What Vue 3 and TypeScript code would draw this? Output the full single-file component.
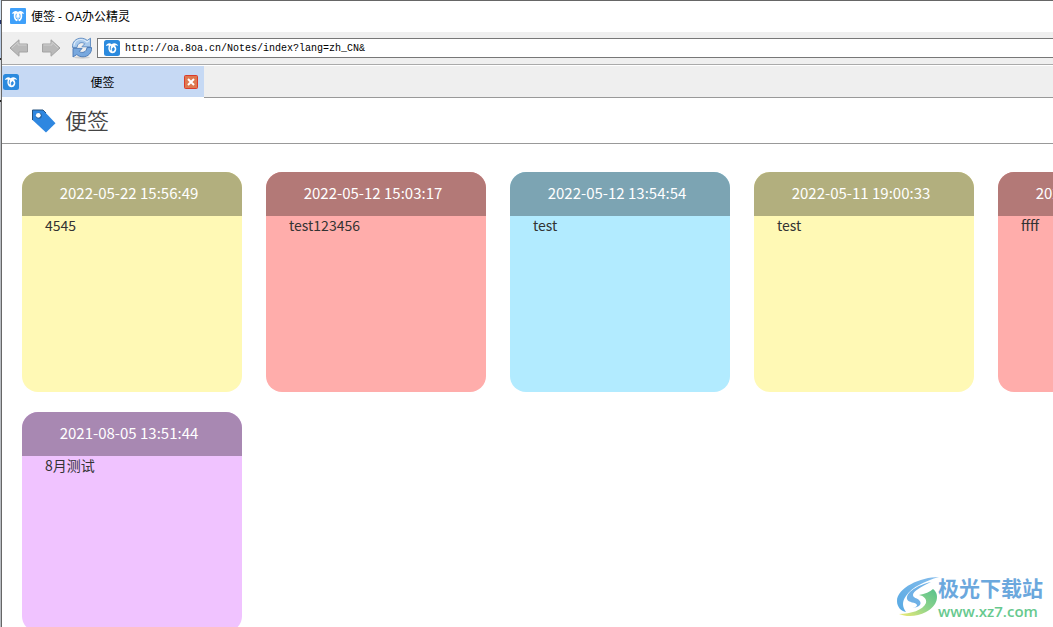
<script setup lang="ts">
interface Note {
  time: string
  text: string
  tone: 'yellow' | 'red' | 'blue' | 'purple'
}

const title = '便签'
const address = 'http://oa.8oa.cn/Notes/index?lang=zh_CN&'

const notes: Note[] = [
  { time: '2022-05-22 15:56:49', text: '4545', tone: 'yellow' },
  { time: '2022-05-12 15:03:17', text: 'test123456', tone: 'red' },
  { time: '2022-05-12 13:54:54', text: 'test', tone: 'blue' },
  { time: '2022-05-11 19:00:33', text: 'test', tone: 'yellow' },
  { time: '2021-12-20 10:21:36', text: 'ffff', tone: 'red' },
  { time: '2021-08-05 13:51:44', text: '8月测试', tone: 'purple' },
]
</script>

<template>
  <div class="desktop">
    <div class="window">
      <header class="titlebar">
        <svg class="logo" viewBox="0 0 16 16" aria-hidden="true">
          <rect width="16" height="16" rx="1" fill="#3fa0fa" />
          <path d="M8 4C6.500 2.300 3.500 2.300 1.800 5.800L4 5.600C3.200 9 4.200 12 6.500 13.200L8 12.500 9.500 13.200C11.800 12 12.800 9 12 5.600L14.200 5.800C12.500 2.300 9.500 2.300 8 4z" fill="#fff" />
          <path d="M6.500 5.800C5.600 7.500 5.700 9.500 6.700 11M9.500 5.800C10.400 7.500 10.300 9.500 9.300 11M8 9.500V13" fill="none" stroke="#3fa0fa" stroke-width=".9" />
        </svg>
        <span>{{ title }} - OA办公精灵</span>
      </header>

      <div class="toolbar">
        <button class="tool" type="button" aria-label="后退">
          <svg viewBox="0 0 20 18"><path d="M1 9 10 .8V5h8.500v8H10v4.200z" fill="#b9b9b9" stroke="#a3a3a3" /><path d="M3 8.800 9 3.300V6h8.500" fill="none" stroke="#cfcfcf" /></svg>
        </button>
        <button class="tool" type="button" aria-label="前进">
          <svg viewBox="0 0 20 18"><path d="M19 9 10 .8V5H1.500v8H10v4.200z" fill="#b9b9b9" stroke="#a3a3a3" /><path d="M2.500 6H11V3.300L17 8.800" fill="none" stroke="#cfcfcf" /></svg>
        </button>
        <button class="tool refresh" type="button" aria-label="刷新">
          <svg viewBox="0 0 22 22">
            <ellipse cx="11" cy="20.500" rx="8" ry="1.200" fill="#cfcfcf" />
            <path d="M1.500 10.500C1 5 5 1.200 10 1.200c2.500 0 4.600.8 6.200 2.300L19.500 1.200v8.600h-8.600l2.800-3C10.800 4.300 6.300 6 6 10.500z" fill="#a9caec" stroke="#5c89c0" stroke-width=".9" />
            <path d="M20.500 10.500C21 16 17 19.800 12 19.800c-2.500 0-4.600-.8-6.200-2.300L2 20v-8.600h9.100l-2.800 3C11.200 16.700 15.700 15 16 10.500z" fill="#78a8de" stroke="#4777b4" stroke-width=".9" />
            <path d="M3 8.500C3.500 4.500 6.500 2.500 10 2.500c2.500 0 4.500 1 6 2.500l2.300-1.500" fill="none" stroke="#deecfa" stroke-width="1.200" />
          </svg>
        </button>
        <label class="address">
          <svg class="logo" viewBox="0 0 16 16" aria-hidden="true">
            <rect width="16" height="16" rx="2.500" fill="#2b8ade" />
            <path d="M1.800 6C3 3 5.800 2.600 7.600 4.200 9.800 2.600 13 3 14.200 6 12.800 5 11.400 5 10.600 5.800 12.800 7 13 11 10.500 12.700 8 14 5 12.600 4.500 9.500 4.200 8 4.400 6.800 5 5.800 4 5.200 2.800 5.300 1.800 6z" fill="#fff" />
            <path d="M6.800 5.800C6 7.500 6 9 6.600 10.200M8.700 11.200C7.800 9.800 8.200 7.800 9.600 7.400 11 8.500 10.500 10.700 8.700 11.200z" fill="#2b8ade" stroke="#2b8ade" stroke-width=".7" />
          </svg>
          <input type="text" aria-label="地址" :value="address" />
        </label>
      </div>

      <nav class="tabs">
        <div class="tab">
          <svg class="logo" viewBox="0 0 16 16" aria-hidden="true">
            <rect width="16" height="16" rx="2.500" fill="#2b8ade" />
            <path d="M1.800 6C3 3 5.800 2.600 7.600 4.200 9.800 2.600 13 3 14.200 6 12.800 5 11.400 5 10.600 5.800 12.800 7 13 11 10.500 12.700 8 14 5 12.600 4.500 9.500 4.200 8 4.400 6.800 5 5.800 4 5.200 2.800 5.300 1.800 6z" fill="#fff" />
            <path d="M6.800 5.800C6 7.500 6 9 6.600 10.200M8.700 11.200C7.800 9.800 8.200 7.800 9.600 7.400 11 8.500 10.500 10.700 8.700 11.200z" fill="#2b8ade" stroke="#2b8ade" stroke-width=".7" />
          </svg>
          <span class="tab-name">{{ title }}</span>
          <button class="close" type="button" aria-label="关闭">
            <svg viewBox="0 0 14 14">
              <rect x=".5" y=".5" width="13" height="13" rx="1" fill="#de7850" stroke="#dc3a2a" />
              <path d="M4 4l6 6M10 4l-6 6" stroke="#fff" stroke-width="2" />
            </svg>
          </button>
        </div>
        <div class="tab-rest"></div>
      </nav>

      <div class="heading">
        <svg class="tag" viewBox="0 0 24 24" aria-hidden="true">
          <path d="M.5 1H11L23.500 14.200 14 23.500 .5 11z" fill="#2f87e0" />
          <path d="M.5 11V1H11l3 3" fill="none" stroke="#27527f" />
          <circle cx="6.800" cy="6.800" r="3" fill="#27629f" />
          <circle cx="6.300" cy="6.300" r="2.400" fill="#fff" />
        </svg>
        <h1>{{ title }}</h1>
      </div>

      <main class="notes">
        <article v-for="note in notes" :key="note.time" class="note" :class="note.tone">
          <h2>{{ note.time }}</h2>
          <p>{{ note.text }}</p>
        </article>
      </main>
    </div>

    <div class="watermark">
      <svg viewBox="0 0 44 42" aria-hidden="true">
        <defs>
          <linearGradient id="swirl-blue" x1="0" y1="1" x2="1" y2="0">
            <stop offset="0" stop-color="#57a9e3" />
            <stop offset="1" stop-color="#86bdec" />
          </linearGradient>
          <linearGradient id="swirl-green" x1="0" y1="1" x2="1" y2="0">
            <stop offset="0" stop-color="#f0ea72" />
            <stop offset=".5" stop-color="#8fd48b" />
            <stop offset="1" stop-color="#55c08c" />
          </linearGradient>
        </defs>
        <path d="M43 1C24 1 1 12 1 25c0 6 4 10 9 11-4-5-4-11 0-16C16 11 29 5 43 1z" fill="url(#swirl-blue)" />
        <path d="M35 6C22 9 10 16 11 23c1 4 9 3 10 6 0 2-3 3-6 3 8 0 12-4 8-8-2-2-6-2-6-5 0-4 8-8 18-13z" fill="#6fb1e6" />
        <path d="M37 13c7 5 5 17-7 23-9 5-20 5-27 2 12 0 24-4 27-11 1-4-2-7-7-8 6-1 11-3 14-6z" fill="url(#swirl-green)" />
      </svg>
      <div class="watermark-text">
        <strong>极光下载站</strong>
        <span>www.xz7.com</span>
      </div>
    </div>
  </div>
</template>

<style>
body {
  margin: 0;
}
</style>

<style scoped>
.desktop {
  box-sizing: border-box;
  height: 100vh;
  overflow: hidden;
  padding-left: 1px;
  background: linear-gradient(#cfe0f2 0 20px, #20306a 20px 24px, #b9cce6 24px 58px, #333 58px 60px, #d8dde4 60px 100px, #222 100px 102px, #b8bcc2 102px);
  font-family: "Noto Sans CJK SC", sans-serif;
  color: #333;
}
.window {
  box-sizing: border-box;
  height: 100%;
  overflow: hidden;
  border-top: 1px solid #666;
  border-left: 1px solid #666;
  background: #fff;
}
button {
  display: block;
  padding: 0;
  border: 0;
  background: none;
}
svg {
  display: block;
}
.logo {
  flex: none;
  width: 16px;
  height: 16px;
}
.titlebar {
  display: flex;
  align-items: center;
  gap: 5px;
  height: 31px;
  padding: 0 8px 2px;
  box-sizing: border-box;
  font-family: "Open Sans", "Noto Sans CJK SC", sans-serif;
  font-size: 12px;
  color: #000;
}
.toolbar {
  display: flex;
  align-items: center;
  gap: 12px;
  height: 32px;
  padding-left: 7px;
  border-bottom: 1px solid #aaa;
  background: #efefef;
}
.tool svg {
  width: 20px;
  height: 18px;
}
.refresh {
  margin: 0 -8px 0 -2px;
}
.refresh svg {
  width: 22px;
  height: 22px;
}
.address {
  flex: 1;
  display: flex;
  align-items: center;
  gap: 5px;
  box-sizing: border-box;
  height: 20px;
  padding-left: 6px;
  border: 1px solid #777;
  border-right: 0;
  background: #fff;
}
.address input {
  flex: 1;
  min-width: 0;
  padding: 0;
  border: 0;
  outline: 0;
  background: none;
  font: 10px "Liberation Mono", monospace;
  color: #000;
}
.tabs {
  display: flex;
  height: 32px;
  padding-top: 1px;
  background: #fff;
}
.tab {
  display: flex;
  align-items: center;
  box-sizing: border-box;
  width: 202px;
  height: 31px;
  padding: 0 6px 0 1px;
  background: #c6d9f4;
  font-size: 12px;
  color: #000;
}
.tab-name {
  flex: 1;
  padding-left: 2px;
  text-align: center;
}
.close svg {
  width: 14px;
  height: 14px;
}
.tab-rest {
  flex: 1;
  box-sizing: border-box;
  border-bottom: 1px solid #999;
  background: #efefef;
}
.heading {
  display: flex;
  align-items: center;
  gap: 9px;
  box-sizing: border-box;
  height: 46px;
  padding-left: 30px;
  border-bottom: 1px solid #999;
}
.tag {
  width: 24px;
  height: 24px;
}
h1 {
  margin: 0;
  padding-bottom: 3px;
  font-size: 22px;
  font-weight: 350;
  line-height: 32px;
  color: #444;
}
.notes {
  display: grid;
  grid-template-columns: repeat(5, 220px);
  gap: 20px 24px;
  padding: 28px 20px;
}
.note {
  height: 220px;
  border-radius: 16px;
  overflow: hidden;
}
h2 {
  margin: 0;
  padding: 0 6px 2px 0;
  font-size: 15px;
  font-weight: 400;
  line-height: 42px;
  text-align: center;
  color: #fff;
}
.note p {
  margin: 0;
  padding: 0 23px;
  font-size: 14px;
  line-height: 18px;
}
.yellow {
  background: #fff9b5;
}
.yellow h2 {
  background: #b2af7e;
}
.red {
  background: #ffadab;
}
.red h2 {
  background: #b37977;
}
.blue {
  background: #b2ebff;
}
.blue h2 {
  background: #7ca4b3;
}
.purple {
  background: #f0c3ff;
}
.purple h2 {
  background: #a888b2;
}
.watermark {
  position: absolute;
  right: 10px;
  bottom: 6px;
  display: flex;
  align-items: center;
}
.watermark svg {
  width: 44px;
  height: 42px;
  margin-right: -2px;
}
.watermark-text {
  display: flex;
  flex-direction: column;
  align-items: flex-start;
}
.watermark strong {
  font-size: 21px;
  line-height: 28px;
  color: #6ba8dd;
}
.watermark span {
  font: 600 15px/20px "Open Sans", sans-serif;
  color: #67c98e;
}
</style>
